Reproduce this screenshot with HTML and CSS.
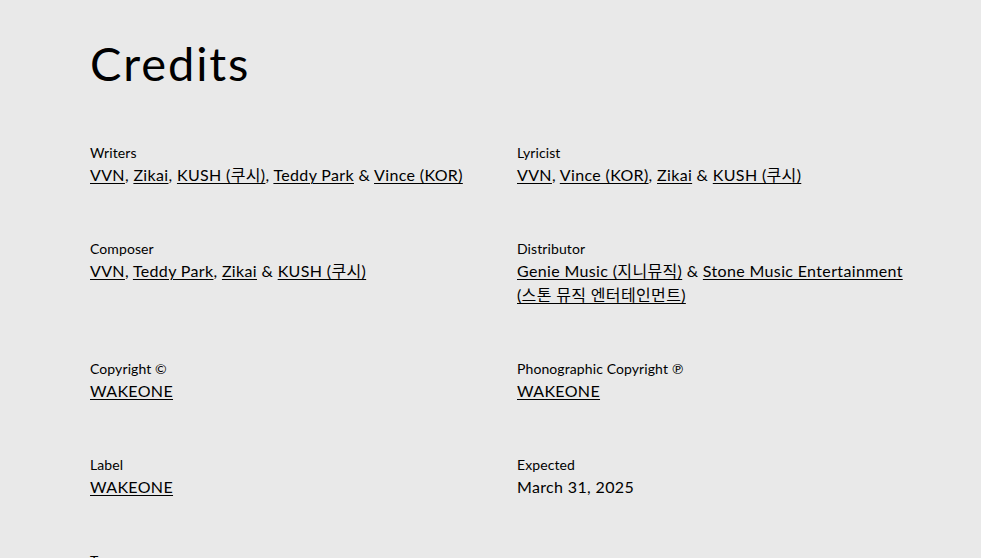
FILE: index.html
```html
<!DOCTYPE html>
<html lang="en">
<head>
<meta charset="utf-8">
<title>Credits</title>
<link rel="stylesheet" href="styles.css">
</head>
<body>
<main class="credits">
  <h1 class="credits-title">Credits</h1>
  <div class="credits-grid">
    <div class="credit">
      <div class="credit-label">Writers</div>
      <div class="credit-value"><a href="#">VVN</a>, <a href="#">Zikai</a>, <a href="#">KUSH (쿠시)</a>, <a href="#">Teddy Park</a> &amp; <a href="#">Vince (KOR)</a></div>
    </div>
    <div class="credit">
      <div class="credit-label">Lyricist</div>
      <div class="credit-value"><a href="#">VVN</a>, <a href="#">Vince (KOR)</a>, <a href="#">Zikai</a> &amp; <a href="#">KUSH (쿠시)</a></div>
    </div>
    <div class="credit">
      <div class="credit-label">Composer</div>
      <div class="credit-value"><a href="#">VVN</a>, <a href="#">Teddy Park</a>, <a href="#">Zikai</a> &amp; <a href="#">KUSH (쿠시)</a></div>
    </div>
    <div class="credit">
      <div class="credit-label">Distributor</div>
      <div class="credit-value"><a href="#">Genie Music (지니뮤직)</a> &amp; <a href="#">Stone Music Entertainment (스톤 뮤직 엔터테인먼트)</a></div>
    </div>
    <div class="credit">
      <div class="credit-label">Copyright ©</div>
      <div class="credit-value"><a href="#">WAKEONE</a></div>
    </div>
    <div class="credit">
      <div class="credit-label">Phonographic Copyright ℗</div>
      <div class="credit-value"><a href="#">WAKEONE</a></div>
    </div>
    <div class="credit">
      <div class="credit-label">Label</div>
      <div class="credit-value"><a href="#">WAKEONE</a></div>
    </div>
    <div class="credit">
      <div class="credit-label">Expected</div>
      <div class="credit-value">March 31, 2025</div>
    </div>
    <div class="credit">
      <div class="credit-label">Tags</div>
      <div class="credit-value"><a href="#">K-Pop (케이팝)</a></div>
    </div>
  </div>
</main>
</body>
</html>
```
FILE: styles.css
```css
html, body {
  margin: 0;
  padding: 0;
  background: #e9e9e9;
  color: #000;
  font-family: "Lato", "Noto Sans", "Noto Sans CJK KR", sans-serif;
}

.credits {
  padding: 35px 0 60px 90px;
}

.credits-title {
  margin: 0;
  font-size: 47px;
  font-weight: 400;
  line-height: 56px;
  letter-spacing: 1.9px;
}

.credits-grid {
  margin-top: 52px;
  display: grid;
  grid-template-columns: 410px 410px;
  column-gap: 17px;
  row-gap: 52px;
}

.credit-label {
  font-size: 14px;
  line-height: 20px;
  letter-spacing: 0.1px;
}

.credit-value {
  font-size: 16px;
  line-height: 24px;
  letter-spacing: 0.35px;
  word-break: keep-all;
}

.credit-value a {
  color: #000;
  text-decoration: underline;
  text-decoration-thickness: 1px;
  text-underline-offset: 2px;
}
```
